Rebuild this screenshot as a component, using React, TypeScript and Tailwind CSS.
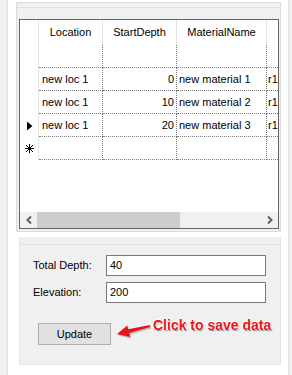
import type { ReactNode } from 'react';

const rows = [
  { loc: 'new loc 1', depth: 0, mat: 'new material 1' },
  { loc: 'new loc 1', depth: 10, mat: 'new material 2' },
  { loc: 'new loc 1', depth: 20, mat: 'new material 3', current: true },
];

function Chevron({ dir }: { dir: 'left' | 'right' }) {
  return (
    <svg width="6" height="8" viewBox="0 0 6 8">
      <polyline
        points={dir === 'left' ? '5,0.5 1.5,4 5,7.5' : '1,0.5 4.5,4 1,7.5'}
        fill="none"
        stroke="#606060"
        strokeWidth="2"
      />
    </svg>
  );
}

function RowMarker({ kind }: { kind: 'current' | 'new' }) {
  if (kind === 'current') {
    return (
      <svg width="6" height="10" viewBox="0 0 6 10">
        <polygon points="0,0.5 5.5,5 0,9.5" fill="#000" />
      </svg>
    );
  }
  return (
    <svg width="9" height="9" viewBox="0 0 9 9" shapeRendering="crispEdges">
      <g stroke="#000" strokeWidth="1">
        <line x1="4.5" y1="0" x2="4.5" y2="9" />
        <line x1="0" y1="4.5" x2="9" y2="4.5" />
        <line x1="1" y1="1" x2="8" y2="8" />
        <line x1="8" y1="1" x2="1" y2="8" />
      </g>
      <rect x="3" y="3" width="3" height="3" fill="#000" />
    </svg>
  );
}

function GridRow({ marker, children }: { marker?: 'current' | 'new'; children?: ReactNode }) {
  return (
    <div className="flex h-[23px]">
      <div className="flex w-[19px] items-center justify-center border-r border-[#e3e3e3] pl-[1px]">
        {marker && <RowMarker kind={marker} />}
      </div>
      {children ?? (
        <>
          <div className="w-[64px] border-r border-b border-dotted border-[#7a7a7a]" />
          <div className="w-[74px] border-r border-b border-dotted border-[#7a7a7a]" />
          <div className="w-[90px] border-r border-b border-dotted border-[#7a7a7a]" />
          <div className="flex-1 border-b border-dotted border-[#7a7a7a]" />
        </>
      )}
    </div>
  );
}

function DataGrid() {
  return (
    <div className="flex h-[210px] w-[260px] flex-col border border-[#646464] bg-white">
      {/* column headers */}
      <div className="flex h-[25px]">
        <div className="w-[19px] border-r border-[#e3e3e3]" />
        <div className="flex w-[64px] items-center justify-center border-r border-[#e3e3e3]">Location</div>
        <div className="flex w-[74px] items-center justify-center border-r border-[#e3e3e3]">StartDepth</div>
        <div className="flex w-[90px] items-center justify-center border-r border-[#e3e3e3]">MaterialName</div>
        <div className="flex-1" />
      </div>

      <GridRow />

      {rows.map((r, i) => (
        <GridRow key={i} marker={r.current ? 'current' : undefined}>
          <div className="flex w-[64px] items-center border-r border-b border-dotted border-[#7a7a7a] pl-[3px]">
            {r.loc}
          </div>
          <div className="flex w-[74px] items-center justify-end border-r border-b border-dotted border-[#7a7a7a] pr-[2px]">
            {r.depth}
          </div>
          <div className="flex w-[90px] items-center border-r border-b border-dotted border-[#7a7a7a] pl-[2px]">
            {r.mat}
          </div>
          <div className="flex flex-1 items-center overflow-hidden border-b border-dotted border-[#7a7a7a] pl-[1px]">
            r1
          </div>
        </GridRow>
      ))}

      <GridRow marker="new" />

      <div className="flex-1" />

      {/* horizontal scrollbar */}
      <div className="flex h-[16px] bg-[#f0f0f0]">
        <div className="flex w-[17px] items-center justify-center">
          <Chevron dir="left" />
        </div>
        <div className="w-[143px] bg-[#cdcdcd]" />
        <div className="flex-1" />
        <div className="flex w-[17px] items-center justify-center">
          <Chevron dir="right" />
        </div>
      </div>
    </div>
  );
}

function Field({ label, value }: { label: string; value: string }) {
  return (
    <div className="flex h-[21px] items-center">
      <span className="w-[73px]">{label}</span>
      <div className="flex h-[21px] w-[160px] items-center border border-[#7a7a7a] bg-white pl-[3px]">{value}</div>
    </div>
  );
}

export default function App() {
  return (
    <div className="flex h-[375px] w-[292px] bg-white font-['Liberation_Sans',Arial,sans-serif] text-[11px] leading-none text-black">
      <div className="w-[8px] shrink-0 border-r border-[#e3e3e3] bg-[#f0f0f0]" />

      <div className="ml-[8px] flex w-[265px] shrink-0 flex-col">
        {/* grid panel */}
        <div className="mt-[2px] h-[230px] border border-[#dadada] bg-[#f0f0f0] pt-[4px]">
          <div className="h-full border-t border-[#e3e3e3] pl-[2px] pt-[11px]">
            <DataGrid />
          </div>
        </div>

        {/* edit panel */}
        <div className="mt-[5px] ml-[3px] h-[128px] w-[262px] border-x border-b border-[#e3e3e3] bg-[#f0f0f0] pt-[7px]">
          <div className="border-t border-[#e3e3e3] pt-[10px] pl-[13px]">
            <Field label="Total Depth:" value="40" />
            <div className="mt-[6px]">
              <Field label="Elevation:" value="200" />
            </div>
            <div className="mt-[20px] flex items-start">
              <button className="ml-[5px] flex h-[22px] w-[73px] items-center justify-center border border-[#adadad] bg-[#e1e1e1]">
                Update
              </button>
              <svg className="mt-[-5px] ml-[3px]" width="38" height="24" viewBox="0 0 38 24">
                <polygon
                  points="3,16 13.3,7.4 14.2,11.3 35.8,7 36.2,9 15.2,15.1 16.1,19"
                  fill="#9a9a9a"
                  opacity="0.6"
                  transform="translate(1,1.5)"
                />
                <polygon points="3,16 13.3,7.4 14.2,11.3 35.8,7 36.2,9 15.2,15.1 16.1,19" fill="#e8141b" />
              </svg>
              <span className="mt-[-6px] ml-[1px] text-[14px] leading-[16px] font-bold whitespace-nowrap text-[#e8141b] [text-shadow:-1px_0_#fff,0_-1px_#fff,1px_0_#fff,1px_1px_1px_#8a8a8a]">
                Click to save data
              </span>
            </div>
          </div>
        </div>
      </div>

      <div className="ml-[7px] w-[4px] shrink-0 border-l border-[#e3e3e3] bg-[#f0f0f0]" />
    </div>
  );
}
